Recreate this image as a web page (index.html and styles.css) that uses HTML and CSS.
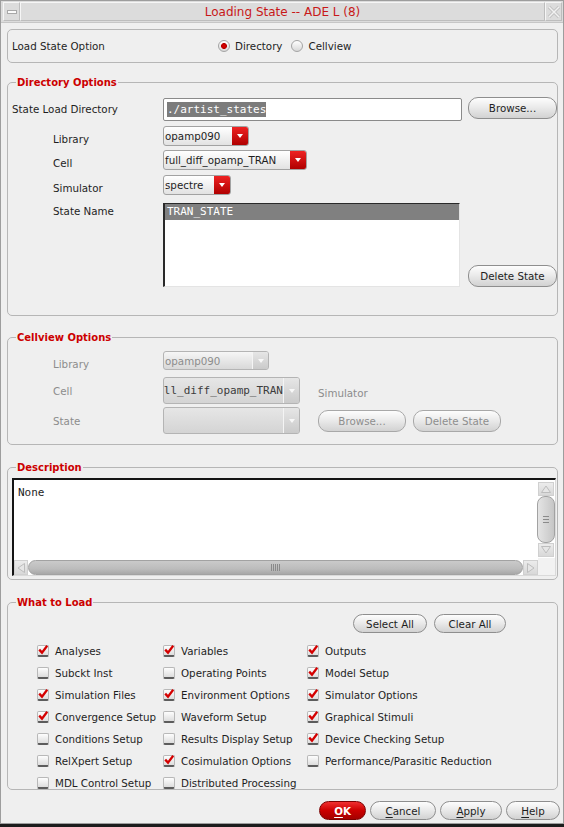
FILE: index.html
```html
<!DOCTYPE html>
<html lang="en">
<head>
    <meta charset="UTF-8">
    <meta name="viewport" content="width=device-width, initial-scale=1.0">
    <title>Loading State -- ADE L (8)</title>
    <link rel="stylesheet" href="styles.css">
</head>
<body>

<div class="window">
    <div class="titlebar">
        <div class="tb-btn tb-min"><span class="tb-dash"></span></div>
        <div class="tb-title">Loading State -- ADE L (8)</div>
        <div class="tb-btn tb-close">
            <svg width="14" height="14" viewBox="0 0 14 14">
                <path d="M2 2 L12 12 M12 2 L2 12" stroke="#c4c4c4" stroke-width="3.4" fill="none"/>
                <path d="M2 2 L12 12 M12 2 L2 12" stroke="#f2f2f2" stroke-width="1.4" fill="none"/>
            </svg>
        </div>
    </div>

    <div class="content">
        <div class="box option-box">
            <span class="opt-label">Load State Option</span>
            <span class="radio checked"></span><span class="radio-text first">Directory</span>
            <span class="radio"></span><span class="radio-text">Cellview</span>
        </div>

        <fieldset class="box dir-box">
            <legend>Directory Options</legend>
            <div class="row row-dir">
                <span class="lbl lbl-main">State Load Directory</span>
                <div class="text-input"><span class="sel-text">./artist_states</span></div>
                <button class="btn btn-side">Browse...</button>
            </div>
            <div class="row row-combo">
                <span class="lbl">Library</span>
                <div class="combo combo-lib"><span class="combo-text">opamp090</span><span class="combo-arrow"></span></div>
            </div>
            <div class="row row-combo gap4">
                <span class="lbl">Cell</span>
                <div class="combo combo-cell"><span class="combo-text">full_diff_opamp_TRAN</span><span class="combo-arrow"></span></div>
            </div>
            <div class="row row-combo">
                <span class="lbl">Simulator</span>
                <div class="combo combo-sim"><span class="combo-text">spectre</span><span class="combo-arrow"></span></div>
            </div>
            <div class="row row-state">
                <span class="lbl lbl-state">State Name</span>
                <div class="list">
                    <div class="list-item selected">TRAN_STATE</div>
                </div>
                <button class="btn btn-side btn-bottom">Delete State</button>
            </div>
        </fieldset>

        <fieldset class="box cv-box">
            <legend>Cellview Options</legend>
            <div class="row cv-lib">
                <span class="lbl off lbl-low">Library</span>
                <div class="combo off combo-cvlib"><span class="combo-text">opamp090</span><span class="combo-arrow"></span></div>
            </div>
            <div class="row cv-cell">
                <span class="lbl off">Cell</span>
                <div class="combo off edit combo-cv"><span class="combo-text mono">ll_diff_opamp_TRAN</span><span class="combo-arrow"></span></div>
                <span class="off sim-label">Simulator</span>
            </div>
            <div class="row cv-state">
                <span class="lbl off">State</span>
                <div class="combo off edit combo-cv"><span class="combo-text"></span><span class="combo-arrow"></span></div>
                <button class="btn off btn-cv">Browse...</button>
                <button class="btn off btn-cv">Delete State</button>
            </div>
        </fieldset>

        <fieldset class="box desc-box">
            <legend>Description</legend>
            <div class="desc">
                <div class="desc-text">None</div>
                <div class="vscroll">
                    <span class="sb-arrow">
                        <svg width="12" height="10" viewBox="0 0 12 10"><path d="M1.5 8.5 L6 2 L10.5 8.5 Z" fill="#e6e6e6" stroke="#bdbdbd"/></svg>
                    </span>
                    <span class="sb-handle v"><span class="grip-v"></span></span>
                    <span class="sb-arrow">
                        <svg width="12" height="10" viewBox="0 0 12 10"><path d="M1.5 1.5 L6 8 L10.5 1.5 Z" fill="#e6e6e6" stroke="#bdbdbd"/></svg>
                    </span>
                </div>
                <div class="hscroll">
                    <span class="sb-arrow">
                        <svg width="10" height="12" viewBox="0 0 10 12"><path d="M8.5 1.5 L2 6 L8.5 10.5 Z" fill="#e6e6e6" stroke="#bdbdbd"/></svg>
                    </span>
                    <span class="sb-handle h"><span class="grip-h"></span></span>
                    <span class="sb-arrow">
                        <svg width="10" height="12" viewBox="0 0 10 12"><path d="M1.5 1.5 L8 6 L1.5 10.5 Z" fill="#e6e6e6" stroke="#bdbdbd"/></svg>
                    </span>
                </div>
                <div class="sb-corner"></div>
            </div>
        </fieldset>

        <fieldset class="box load-box">
            <legend>What to Load</legend>
            <div class="select-row">
                <button class="btn btn-sel">Select All</button>
                <button class="btn btn-clear">Clear All</button>
            </div>
            <div class="checks" id="checks"></div>
        </fieldset>
    </div>

    <div class="footer">
        <button class="btn btn-ok"><u>O</u>K</button>
        <button class="btn btn-cancel"><u>C</u>ancel</button>
        <button class="btn btn-apply"><u>A</u>pply</button>
        <button class="btn btn-help"><u>H</u>elp</button>
    </div>
</div>

<script>
    // rows of the "What to Load" grid, three columns each
    const items = [
        ["Analyses", true], ["Variables", true], ["Outputs", true],
        ["Subckt Inst", false], ["Operating Points", false], ["Model Setup", true],
        ["Simulation Files", true], ["Environment Options", true], ["Simulator Options", true],
        ["Convergence Setup", true], ["Waveform Setup", false], ["Graphical Stimuli", true],
        ["Conditions Setup", false], ["Results Display Setup", false], ["Device Checking Setup", true],
        ["RelXpert Setup", false], ["Cosimulation Options", true], ["Performance/Parasitic Reduction", false],
        ["MDL Control Setup", false], ["Distributed Processing", false], null
    ];

    const checkSvg = '<svg width="12" height="12" viewBox="0 0 12 12"><path d="M2.2 5.6 L5 8.6 L10.2 1.8" stroke="#d40000" stroke-width="2.3" fill="none"/></svg>';

    const box = document.getElementById("checks");
    items.forEach(item => {
        if (!item) {
            box.innerHTML += '<span></span>';
            return;
        }
        box.innerHTML += `
            <label class="check">
                <span class="cb">${item[1] ? checkSvg : ""}</span>
                <span>${item[0]}</span>
            </label>
        `;
    });
</script>

</body>
</html>
```

FILE: styles.css
```css
* {
    box-sizing: border-box;
}
html, body {
    margin: 0;
    background: #1c1c1c;
}
body {
    font-family: "DejaVu Sans", sans-serif;
    font-size: 10.3px;
    color: #1e1e1e;
}
.window {
    width: 564px;
    height: 824px;
    background: #efefef;
    border: 1px solid #9d9d9d;
    display: flex;
    flex-direction: column;
}

/* title bar */
.titlebar {
    height: 22px;
    display: flex;
    background: #dcdcdc;
    border-bottom: 1px solid #c6c6c6;
    padding: 1px 1px 1px 2px;
}
.tb-btn {
    width: 17px;
    display: flex;
    align-items: center;
    justify-content: center;
    border: 1px solid #bdbdbd;
    border-top-color: #f6f6f6;
    border-left-color: #f6f6f6;
}
.tb-dash {
    width: 10px;
    height: 4px;
    background: #fbfbfb;
    border: 1px solid #a8a8a8;
}
.tb-title {
    flex: 1;
    text-align: center;
    color: #c81818;
    font-size: 12px;
    line-height: 19px;
    border: 1px solid #bdbdbd;
    border-top-color: #f6f6f6;
    border-left-color: #f6f6f6;
}

.content {
    padding: 0 5px 0 6px;
}

/* group boxes */
.box {
    margin: 0;
    min-width: 0;
    border: 1px solid #b6b6b6;
    border-radius: 5px;
    padding: 0;
}
.box legend {
    margin-left: 8px;
    padding: 0 1px;
    line-height: 13px;
    color: #cc0000;
    font-size: 10px;
    font-weight: bold;
}
.option-box {
    margin-top: 6px;
    height: 34px;
    display: flex;
    align-items: center;
}
.opt-label {
    width: 210px;
    padding-left: 4px;
}
.radio {
    width: 12px;
    height: 12px;
    border-radius: 50%;
    border: 1px solid #a4a4a4;
    background: linear-gradient(#ffffff, #d8d8d8);
    margin-right: 5px;
}
.radio.checked {
    background: radial-gradient(circle, #e00000 0, #b80000 2.6px, transparent 3.3px), linear-gradient(#ffffff, #d8d8d8);
}
.radio-text.first {
    margin-right: 9px;
}

.dir-box {
    margin-top: 13px;
    padding: 8px 0 28px 0;
}
.cv-box {
    margin-top: 15px;
    padding: 7px 0 10px 0;
}
.desc-box {
    margin-top: 16px;
    padding: 4px 1px 3px 4px;
}
.desc-box legend {
    margin-left: 4px;
}
.load-box {
    margin-top: 16px;
    padding: 5px 0 0 0;
}

.row {
    display: flex;
    align-items: center;
}
.lbl {
    width: 155px;
    padding-left: 45px;
    padding-top: 6px;
}
.lbl-main {
    padding-left: 4px;
    padding-top: 0;
}
.row-dir {
    height: 24px;
}
.row-combo {
    height: 20px;
    margin-top: 5px;
}
.row-combo.gap4 {
    margin-top: 4px;
}
.row-state {
    margin-top: 8px;
    align-items: flex-start;
}
.lbl-state {
    padding-top: 2px;
}

.off {
    color: #8c8c8c;
}

/* text input and list */
.text-input {
    width: 299px;
    height: 23px;
    background: #ffffff;
    border: 1px solid #8a8a8a;
    border-radius: 2px;
    padding-left: 3px;
    display: flex;
    align-items: center;
}
.sel-text, .list-item, .desc-text, .mono {
    font-family: "DejaVu Sans Mono", monospace;
    font-size: 11px;
}
.sel-text {
    background: #7c7c7c;
    color: #ffffff;
    line-height: 15px;
}
.list {
    width: 297px;
    height: 84px;
    background: #ffffff;
    border-top: 1px solid #2a2a2a;
    border-left: 2px solid #2a2a2a;
    border-right: 1px solid #e4e4e4;
    border-bottom: 1px solid #e4e4e4;
}
.list-item {
    height: 16px;
    line-height: 16px;
    padding-left: 2px;
}
.list-item.selected {
    background: #808080;
    color: #ffffff;
}

/* combo boxes */
.combo {
    display: flex;
    height: 20px;
    border: 1px solid #a2a2a2;
    border-radius: 3px;
    background: linear-gradient(#ffffff, #e2e2e2);
    overflow: hidden;
}
.combo-text {
    flex: 1;
    padding-left: 1px;
    line-height: 18px;
    white-space: nowrap;
    overflow: hidden;
}
.combo-arrow {
    width: 16px;
    display: flex;
    align-items: center;
    justify-content: center;
    background: linear-gradient(#ee2222, #b00000);
}
.combo-arrow::after {
    content: "";
    border-left: 3.5px solid transparent;
    border-right: 3.5px solid transparent;
    border-top: 4px solid #ffffff;
}
.combo-lib { width: 86px; }
.combo-cell { width: 144px; }
.combo-sim { width: 68px; }

.combo.off {
    border-color: #b4b4b4;
    background: linear-gradient(#f6f6f6, #d8d8d8);
}
.combo.off .combo-arrow {
    background: linear-gradient(#e6e6e6, #cacaca);
    border-left: 1px solid #f4f4f4;
}
.combo.off .combo-arrow::after {
    border-top-color: #f8f8f8;
}
.combo.edit {
    background: linear-gradient(#e6e6e6, #d4d4d4);
}
.combo.edit .combo-text {
    line-height: 25px;
    color: #3c3c3c;
    padding-left: 0;
    text-overflow: clip;
    direction: rtl;
    text-align: left;
}

.cv-lib {
    height: 19px;
    align-items: flex-start;
}
.lbl-low {
    padding-top: 7px;
}
.combo-cvlib {
    width: 106px;
    height: 19px;
}
.cv-cell {
    height: 27px;
    margin-top: 7px;
}
.cv-state {
    height: 27px;
    margin-top: 3px;
}
.cv-cell .lbl, .cv-state .lbl {
    padding-top: 0;
}
.combo-cv {
    width: 137px;
    height: 27px;
}
.sim-label {
    margin-left: 18px;
    padding-top: 4px;
}

/* pill buttons */
.btn {
    font-family: inherit;
    font-size: inherit;
    color: #1e1e1e;
    padding: 0;
    height: 22px;
    border: 1px solid #8e8e8e;
    border-radius: 10px;
    background: linear-gradient(#fdfdfd, #ebebeb 45%, #d2d2d2);
    cursor: pointer;
}
.btn u {
    text-decoration-thickness: 1px;
    text-underline-offset: 2px;
}
.btn-side {
    width: 89px;
    margin-left: 6px;
}
.row-dir .btn-side {
    margin-left: 6px;
    align-self: flex-start;
}
.btn-bottom {
    align-self: flex-end;
    margin-left: 8px;
}
.btn.off {
    color: #8e8e8e;
    border-color: #a8a8a8;
}
.btn-cv {
    width: 88px;
    margin-left: 7px;
}
.btn-cv:first-of-type {
    margin-left: 18px;
}

/* description */
.desc {
    width: 544px;
    height: 98px;
    background: #ffffff;
    border-top: 2px solid #141414;
    border-left: 2px solid #141414;
    border-right: 1px solid #dadada;
    border-bottom: 1px solid #dadada;
    display: grid;
    grid-template-columns: 1fr 17px;
    grid-template-rows: 1fr 17px;
}
.desc-text {
    padding: 6px 4px 4px;
    line-height: 14px;
}
.vscroll {
    display: flex;
    flex-direction: column;
    padding: 2px 1px 1px 0;
}
.hscroll {
    display: flex;
    padding: 2px 0 0 0;
}
.sb-corner {
    background: #f2f2f2;
}
.sb-arrow {
    flex: 0 0 14px;
    display: flex;
    align-items: center;
    justify-content: center;
    background: linear-gradient(#ececec, #d8d8d8);
    border: 1px solid #d0d0d0;
}
.hscroll .sb-arrow:last-child {
    flex-basis: 15px;
}
.sb-handle {
    flex: 1;
    display: flex;
    align-items: center;
    justify-content: center;
    border: 1px solid #a2a2a2;
    border-radius: 8px;
}
.sb-handle.v {
    background: linear-gradient(to right, #e4e4e4, #c6c6c6);
    margin: 0 -1px;
}
.sb-handle.h {
    background: linear-gradient(#cacaca, #bcbcbc 60%, #a8a8a8);
}
.grip-v {
    width: 6px;
    height: 7px;
    background: repeating-linear-gradient(#8a8a8a 0 1px, transparent 1px 3px);
}
.grip-h {
    width: 9px;
    height: 7px;
    background: repeating-linear-gradient(to right, #8a8a8a 0 1px, transparent 1px 2px);
}

/* what to load */
.select-row {
    display: flex;
    justify-content: flex-end;
    padding-right: 51px;
}
.btn-sel {
    width: 74px;
    height: 19px;
}
.btn-clear {
    width: 72px;
    height: 19px;
    margin-left: 7px;
}
.checks {
    margin-top: 7px;
    margin-bottom: -5px;
    padding-left: 29px;
    display: grid;
    grid-template-columns: 126px 144px 1fr;
    grid-auto-rows: 22px;
}
.check {
    display: flex;
    align-items: center;
    white-space: nowrap;
}
.cb {
    width: 12px;
    height: 12px;
    margin-right: 6px;
    border: 1px solid #b8b8b8;
    border-bottom: 2px solid #5c5c5c;
    border-radius: 2px;
    background: linear-gradient(#fdfdfd, #dddddd);
    display: flex;
    align-items: center;
    justify-content: center;
    overflow: visible;
}
.cb svg {
    flex: none;
    margin-top: -1px;
}

/* bottom buttons */
.footer {
    display: flex;
    justify-content: flex-end;
    gap: 4px;
    margin-top: 11px;
    padding-right: 3px;
}
.footer .btn {
    height: 19px;
}
.btn-ok {
    width: 47px;
    color: #ffffff;
    font-weight: bold;
    border-color: #7c0000;
    background: linear-gradient(#f03030, #cc0000 50%, #a40000);
}
.btn-cancel { width: 66px; }
.btn-apply { width: 62px; }
.btn-help { width: 54px; }
```
